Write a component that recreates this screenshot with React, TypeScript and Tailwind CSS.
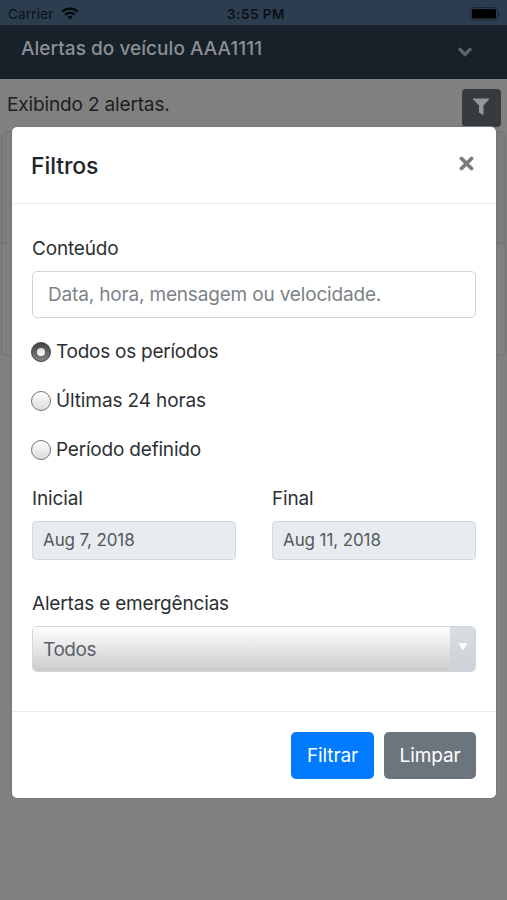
import React, { useState } from "react";

const periods = [
  { value: "all", label: "Todos os períodos", tracking: "tracking-[-0.25px]" },
  { value: "day", label: "Últimas 24 horas", tracking: "tracking-[-0.12px]" },
  { value: "custom", label: "Período definido", tracking: "tracking-[-0.2px]" },
];

function StatusBar() {
  return (
    <div className="grid h-[25px] grid-cols-3 items-center bg-[#2c3d50] pl-2 pr-[7px] pt-[2px] text-[13.5px] text-[#0b0f14]">
      <div className="flex items-center gap-[7px] tracking-[0.2px]">
        <span className="pt-px">Carrier</span>
        <svg width="18" height="13" viewBox="0 0 18 13" fill="none" stroke="#05080b" strokeWidth="2.3">
          <path d="M1.2 4.6C5.6 0.5 12.4 0.5 16.8 4.6" />
          <path d="M4.1 7.7C6.9 5.2 11.1 5.2 13.9 7.7" />
          <path d="M6.3 9.8C7.8 8.4 10.2 8.4 11.7 9.8L9 12.6Z" fill="#05080b" stroke="none" />
        </svg>
      </div>
      <span className="pl-[4px] pt-px text-center font-semibold tracking-[0.5px]">3:55 PM</span>
      <svg className="justify-self-end" width="30" height="14" viewBox="0 0 30 14">
        <rect x="0.5" y="0.5" width="27" height="12.5" rx="3" fill="none" stroke="#1c2834" />
        <rect x="2" y="2" width="24" height="9.5" rx="1.5" fill="#000" />
        <path d="M28.500 4.500c1.500 .6 1.500 4 0 4.600z" fill="#1c2834" />
      </svg>
    </div>
  );
}

function Navbar() {
  return (
    <div className="flex h-[54px] items-start justify-between bg-[#18202a] pl-[21px] pr-[34px] pt-[11px]">
      <span className="text-[19px] leading-[25px] font-medium tracking-[0.04px] text-[#8b8f94]">Alertas do veículo AAA1111</span>
      <svg className="mt-[10px]" width="16" height="11" viewBox="0 0 16 11" fill="none">
        <path d="M2 2.400L8 8.400L14 2.400" stroke="#5d646b" strokeWidth="3.4" />
      </svg>
    </div>
  );
}

function DateField({ label, value }: { label: string; value: string }) {
  return (
    <div className="w-[204px]">
      <div className="h-6 leading-6">{label}</div>
      <div className="mt-[10px] flex h-[39px] items-center rounded-[4px] border border-[#d3d8dc] bg-[#e9ecef] px-[10px] text-[17px] tracking-[-0.1px] text-[#54595e]">
        {value}
      </div>
    </div>
  );
}

function FilterModal() {
  const [period, setPeriod] = useState("all");

  return (
    <div className="absolute left-[12px] top-[127px] flex h-[671px] w-[484px] flex-col rounded-[5px] bg-white text-[19px] text-[#2c3034] shadow-[0_0_0_1px_#777777]">
      <div className="flex h-[77px] items-start justify-between border-b border-[#e9ecef] pl-[19px] pr-[22px] pt-[24px]">
        <h5 className="text-[23px] leading-[30px] font-medium tracking-[-0.1px] text-[#212529]">Filtros</h5>
        <svg className="mt-[5px]" width="15" height="15" viewBox="0 0 15 15" fill="none">
          <path d="M2.500 2.500L12.500 12.500M12.500 2.500L2.500 12.500" stroke="#7b7b7b" strokeWidth="3.8" strokeLinecap="round" />
        </svg>
      </div>

      <div className="flex flex-1 flex-col px-5 pt-[33px]">
        <label className="h-6 leading-6 tracking-[-0.18px]">Conteúdo</label>
        <input
          className="mt-[10px] h-[47px] w-full rounded-[5px] border border-[#ced4da] bg-white px-[15px] text-[19px] tracking-[-0.17px] placeholder:text-[#7c8389]"
          placeholder="Data, hora, mensagem ou velocidade."
        />

        <div className="-ml-px mt-[22px] flex flex-col gap-[25px]">
          {periods.map((item) => (
            <div
              key={item.value}
              className="flex h-6 items-center gap-[5px]"
              onClick={() => setPeriod(item.value)}
            >
              {period === item.value ? (
                <span className="flex h-5 w-5 items-center justify-center rounded-full border border-[#3f3f3f] bg-linear-to-b from-[#444] to-[#848484]">
                  <span className="h-2 w-2 rounded-full bg-linear-to-b from-[#d8d8d8] to-white" />
                </span>
              ) : (
                <span className="h-5 w-5 rounded-full border-[1.5px] border-[#737373] bg-linear-to-b from-white to-[#dcdcdc]" />
              )}
              <span className={item.tracking}>{item.label}</span>
            </div>
          ))}
        </div>

        <div className="mt-[25px] flex justify-between tracking-[-0.15px]">
          <DateField label="Inicial" value="Aug 7, 2018" />
          <DateField label="Final" value="Aug 11, 2018" />
        </div>

        <label className="mt-[32px] h-6 leading-6 tracking-[-0.18px]">Alertas e emergências</label>
        <div className="mt-[10px] flex h-[46px] overflow-hidden rounded-[5px] border border-[#d3d6d9]">
          <div className="flex flex-1 items-center bg-linear-to-b from-white to-[#cccccc] pl-[10px] pt-[3px] tracking-[-0.4px] text-[#5b6066]">
            Todos
          </div>
          <div className="flex w-[25px] justify-center bg-linear-to-b from-[#d8dde2] to-[#ccd2d7] pt-[16px]">
            <svg width="10" height="8" viewBox="0 0 10 8">
              <path d="M0.500 0h9L5 7.500z" fill="#fff" />
            </svg>
          </div>
        </div>
      </div>

      <div className="flex h-[87px] justify-end gap-[10px] border-t border-[#e9ecef] pr-5 pt-5 text-white">
        <button className="h-[47px] w-[83px] rounded-[5px] bg-[#007bff] pt-[2px] tracking-[-0.1px]">Filtrar</button>
        <button className="h-[47px] w-[92px] rounded-[5px] bg-[#6c757d] pt-[2px] tracking-[-0.1px]">Limpar</button>
      </div>
    </div>
  );
}

export default function App() {
  return (
    <div className="relative h-[900px] w-[507px] overflow-hidden bg-[#808080] font-['Inter','Liberation_Sans',sans-serif]">
      <StatusBar />
      <Navbar />
      <div className="flex h-[52px] items-start justify-between pl-[7px] pr-[6px] pt-[10px]">
        <span className="mt-[4px] text-[19px] leading-6 tracking-[-0.15px] text-[#1c1e20]">Exibindo 2 alertas.</span>
        <div className="flex h-[38px] w-[39px] items-center justify-center rounded-[4px] bg-[#363b3f]">
          <svg className="-mt-[2px] -ml-px" width="18" height="18" viewBox="0 0 18 18">
            <path
              d="M1.200 1H16.800L11 7.500V16.500L7.500 14.500V7.500Z"
              fill="#949698"
              stroke="#949698"
              strokeLinejoin="round"
            />
          </svg>
        </div>
      </div>
      <div className="mx-px h-[225px] rounded-[5px] border border-[#707070]">
        <div className="h-[112px] border-b border-[#727272] bg-[#7d7d7d]" />
      </div>
      <FilterModal />
    </div>
  );
}
